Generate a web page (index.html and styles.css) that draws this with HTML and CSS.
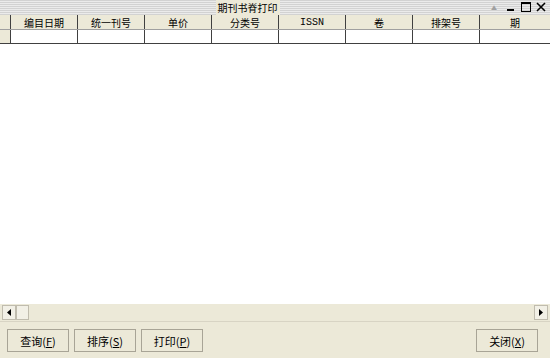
FILE: index.html
```html
<!DOCTYPE html>
<html lang="zh-CN">
<head>
    <meta charset="UTF-8">
    <title>期刊书脊打印</title>
    <link rel="stylesheet" href="styles.css">
</head>
<body>
    <div class="window">
        <div class="titlebar">
            <span class="title">期刊书脊打印</span>
            <div class="controls">
                <span class="ctl up">&#9650;</span>
                <svg class="ctl" width="10" height="10" viewBox="0 0 10 10"><rect x="1" y="7" width="7" height="2" fill="#000"/></svg>
                <svg class="ctl" width="10" height="10" viewBox="0 0 10 10"><rect x="0.5" y="0.5" width="9" height="9" fill="none" stroke="#000"/><rect x="0" y="0" width="10" height="2" fill="#000"/></svg>
                <svg class="ctl" width="10" height="10" viewBox="0 0 10 10"><path d="M1 1 L9 9 M9 1 L1 9" stroke="#000" stroke-width="1.6"/></svg>
            </div>
        </div>

        <div class="grid">
            <div class="row head">
                <div class="cell ind"></div>
                <div class="cell">编目日期</div>
                <div class="cell">统一刊号</div>
                <div class="cell">单价</div>
                <div class="cell">分类号</div>
                <div class="cell mono">ISSN</div>
                <div class="cell">卷</div>
                <div class="cell">排架号</div>
                <div class="cell last">期</div>
            </div>
            <div class="row data">
                <div class="cell ind"></div>
                <div class="cell"></div>
                <div class="cell"></div>
                <div class="cell"></div>
                <div class="cell"></div>
                <div class="cell"></div>
                <div class="cell"></div>
                <div class="cell"></div>
                <div class="cell last"></div>
            </div>
            <div class="blank"></div>
        </div>

        <div class="hscroll">
            <div class="sbtn"><svg width="4" height="7" viewBox="0 0 4 7"><path d="M4 0 L0 3.5 L4 7 Z" fill="#000"/></svg></div>
            <div class="thumb"></div>
            <div class="track"></div>
            <div class="sbtn"><svg width="4" height="7" viewBox="0 0 4 7"><path d="M0 0 L4 3.5 L0 7 Z" fill="#000"/></svg></div>
        </div>

        <div class="footer">
            <button class="btn">查询(<u>F</u>)</button>
            <button class="btn">排序(<u>S</u>)</button>
            <button class="btn">打印(<u>P</u>)</button>
            <div class="spacer"></div>
            <button class="btn">关闭(<u>X</u>)</button>
        </div>
    </div>
</body>
</html>
```

FILE: styles.css
```css
body {
    margin: 0;
    width: 550px;
    height: 358px;
    overflow: hidden;
    background: #ece9d8;
    font-family: "Noto Sans CJK SC", "DejaVu Sans", sans-serif;
    font-size: 10px;
    color: #000;
}

.window {
    display: flex;
    flex-direction: column;
    height: 358px;
}

.titlebar {
    position: relative;
    height: 15px;
    display: flex;
    justify-content: center;
    align-items: center;
    background: repeating-linear-gradient(to bottom, #d2d2d2 0px, #d2d2d2 1px, #ebebeb 1px, #ebebeb 2px);
}

.title {
    background: #ece9d8;
    padding: 0 2px;
    line-height: 15px;
    font-size: 10px;
    margin-left: -55px;
}

.controls {
    position: absolute;
    right: 4px;
    top: 2px;
    display: flex;
    gap: 5px;
    align-items: center;
}

.ctl.up {
    font-size: 6px;
    color: #a0a0a0;
    margin-right: 4px;
}

.grid {
    flex: 1;
    display: flex;
    flex-direction: column;
    background: #fff;
}

.row {
    display: flex;
}

.row.head {
    background: #ece9d8;
    height: 14px;
}

.row.head .cell {
    padding-top: 1px;
}

.row.data {
    background: #fff;
    border-top: 1px solid #a0a0a0;
    border-bottom: 1px solid #404040;
    height: 13px;
}

.cell {
    width: 66px;
    border-right: 1px solid #404040;
    display: flex;
    justify-content: center;
    align-items: center;
    overflow: hidden;
    white-space: nowrap;
}

.cell.ind {
    width: 10px;
    background: #ece9d8;
}

.cell.last {
    flex: 1;
    border-right: none;
}

.cell.mono {
    font-family: "Liberation Mono", monospace;
    font-size: 10px;
}

.blank {
    flex: 1;
    background: #fff;
}

.hscroll {
    display: flex;
    height: 16px;
    padding: 1px 2px 0;
    background: #ece9d8;
    border-bottom: 1px solid #d8d4c4;
}

.sbtn {
    width: 12px;
    height: 13px;
    border: 1px solid #c0bcae;
    display: flex;
    justify-content: center;
    align-items: center;
    background: #f2f0e6;
}

.thumb {
    width: 11px;
    height: 13px;
    border: 1px solid #c0bcae;
    background: #f2f0e6;
}

.track {
    flex: 1;
}

.footer {
    display: flex;
    align-items: flex-start;
    padding: 7px 12px 6px 7px;
    gap: 5px;
}

.spacer {
    flex: 1;
}

.btn {
    width: 62px;
    height: 23px;
    background: #ece9d8;
    border: 1px solid #a8a496;
    font-family: inherit;
    font-size: 11px;
    padding: 0;
    color: #000;
}
```
